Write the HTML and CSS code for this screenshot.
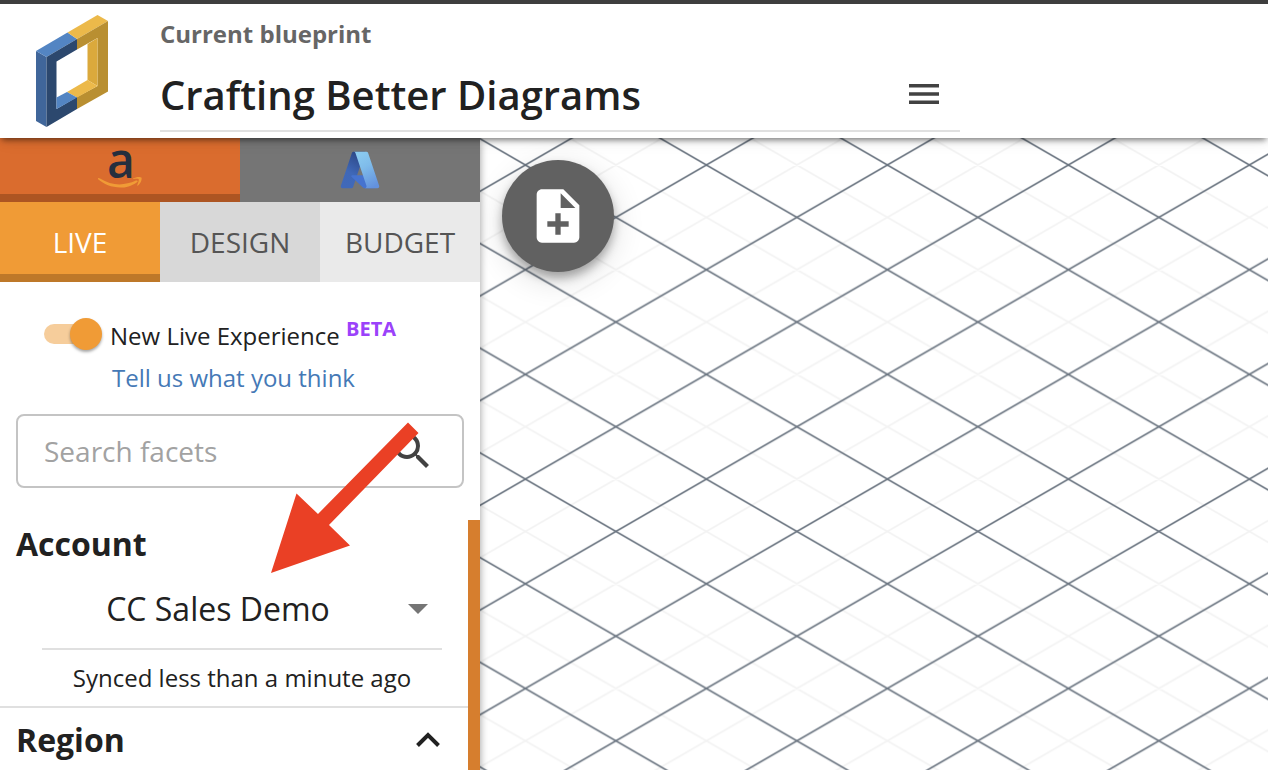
FILE: index.html
```html
<!DOCTYPE html>
<html lang="en">
<head>
<meta charset="utf-8">
<meta name="viewport" content="width=device-width, initial-scale=1">
<title>Crafting Better Diagrams</title>
<link rel="stylesheet" href="styles.css">
</head>
<body class="app">
<header class="header">
  <a class="brand" href="#" aria-label="Home">
    <svg width="76" height="114" viewBox="34 14 76 114" aria-hidden="true">
      <path fill="#40669a" d="M36 51l10.500 6v70L36 121z"/>
      <path fill="#5385c3" d="M36 51l31.500-18.500L77 39 46.500 57z"/>
      <path fill="#ecb94a" d="M67.500 32.500L97.500 15 108 21 77 39z"/>
      <path fill="#2c486e" d="M46.500 57L77 39v10.500L56.500 61.500V109L77 97v12l-30.500 18z"/>
      <path fill="#b98f31" d="M77 39l31-18v70.500L77 109V97l20.500-11V38L77 49.500z"/>
      <path fill="#dba93c" d="M87.500 44l10-6v48l-10-6z"/>
      <path fill="#ecb94a" d="M87.500 80l10 6L77 97.500 67 92z"/>
      <path fill="#5385c3" d="M67 92l10 5.500L56.500 109V97.500z"/>
    </svg>
  </a>
  <div class="blueprint">
    <label class="blueprint-label" for="blueprint-name">Current blueprint</label>
    <div class="blueprint-field">
      <input class="blueprint-name" id="blueprint-name" type="text" value="Crafting Better Diagrams">
      <button class="icon-button" type="button" aria-label="Blueprint menu">
        <svg width="32" height="20" viewBox="0 0 32 20" aria-hidden="true"><path fill="#424242" d="M1 0h30v3.400H1zM1 8.300h30v3.400H1zM1 16.600h30V20H1z"/></svg>
      </button>
    </div>
  </div>
</header>
<div class="workspace">
  <aside class="sidebar">
    <div class="clouds">
      <button class="cloud cloud-active" type="button" aria-label="AWS">
        <svg class="aws" width="48" height="40" viewBox="0 0 48 40" aria-hidden="true">
          <text class="aws-letter" x="25" y="29" text-anchor="middle">a</text>
          <path fill="#f09b36" d="M2 29.500c.4-.8 1.200-.4 2 .1C16 37 28 37 40 31.600c1.500-.7 2.400.5 1 1.600C35 37.400 30 38.600 24.500 38.600 15.500 38.600 7.500 35 2.400 30.600c-.4-.4-.6-.7-.4-1.100z"/>
          <path fill="#f09b36" d="M37 29.600c3-2 7.600-2 8.400-1 .8 1-.2 5.600-3.400 7.800-.7.500-1 .2-.7-.5.900-2 2-5 1.300-5.800-.7-.7-3.300-.4-5-.2-.8.100-1-.1-.6-.3z"/>
        </svg>
      </button>
      <button class="cloud" type="button" aria-label="Azure">
        <svg width="42" height="42" viewBox="0 0 96 96" aria-hidden="true">
          <defs>
            <linearGradient id="az-left" x1="0.700" y1="0" x2="0.300" y2="1"><stop offset="0" stop-color="#2c4684"/><stop offset="0.600" stop-color="#3f68b8"/><stop offset="1" stop-color="#4169b9"/></linearGradient>
            <linearGradient id="az-right" x1="0.300" y1="0" x2="0.700" y2="1"><stop offset="0" stop-color="#8bcbf0"/><stop offset="0.400" stop-color="#7fbcea"/><stop offset="1" stop-color="#6391dd"/></linearGradient>
          </defs>
          <path fill="url(#az-left)" d="M33.338 6.544h26.038l-27.030 80.087a4.152 4.152 0 0 1-3.933 2.824H8.149a4.145 4.145 0 0 1-3.928-5.470L29.404 9.368a4.152 4.152 0 0 1 3.934-2.825z"/>
          <path fill="#4673cf" d="M71.175 60.261h-41.290a1.911 1.911 0 0 0-1.305 3.309l26.532 24.764a4.171 4.171 0 0 0 2.846 1.121h23.380z"/>
          <path fill="url(#az-right)" d="M66.595 9.364a4.145 4.145 0 0 0-3.928-2.820H33.648a4.146 4.146 0 0 1 3.928 2.820l25.184 74.620a4.146 4.146 0 0 1-3.928 5.472h29.020a4.146 4.146 0 0 0 3.927-5.472z"/>
        </svg>
      </button>
    </div>
    <nav class="modes">
      <button class="mode mode-live" type="button">LIVE</button>
      <button class="mode mode-design" type="button">DESIGN</button>
      <button class="mode mode-budget" type="button">BUDGET</button>
    </nav>
    <div class="experience">
      <div class="toggle-row">
        <input class="switch" id="live-toggle" type="checkbox" role="switch" checked>
        <label class="toggle-label" for="live-toggle">New Live Experience <span class="beta">BETA</span></label>
      </div>
      <a class="feedback" href="#">Tell us what you think</a>
    </div>
    <div class="search">
      <input class="search-input" type="search" placeholder="Search facets" aria-label="Search facets">
      <svg class="search-icon" width="48" height="48" viewBox="0 0 24 24" aria-hidden="true"><path fill="#424242" d="M15.500 14h-.79l-.28-.27A6.471 6.471 0 0 0 16 9.500 6.500 6.500 0 1 0 9.500 16c1.610 0 3.090-.59 4.230-1.570l.27.28v.79l5 4.990L20.490 19l-4.990-5zm-6 0C7.010 14 5 11.990 5 9.500S7.010 5 9.500 5 14 7.010 14 9.500 11.990 14 9.500 14z"/></svg>
    </div>
    <div class="facets">
      <div class="facet-list">
        <section class="facet">
          <label class="facet-title" for="account">Account</label>
          <div class="account">
            <select class="account-select" id="account"><option>CC Sales Demo</option></select>
            <svg class="account-caret" width="20" height="10" viewBox="0 0 20 10" aria-hidden="true"><path fill="#757575" d="M0 0h20L10 10z"/></svg>
          </div>
          <p class="synced">Synced less than a minute ago</p>
        </section>
        <section class="facet">
          <button class="facet-toggle" type="button">
            <span class="facet-title">Region</span>
            <svg width="24" height="16" viewBox="0 0 24 16" aria-hidden="true"><path fill="none" stroke="#212121" stroke-width="4" d="M1.500 13.500L12 3l10.500 10.500"/></svg>
          </button>
        </section>
      </div>
      <div class="scrollbar"></div>
    </div>
    <svg class="pointer" width="148" height="152" viewBox="0 0 148 152" aria-hidden="true"><path fill="#ea4025" d="M137 .500L147.500 11 58 103l21 20.500L0 151 25.500 71.500 47 92z"/></svg>
  </aside>
  <main class="canvas">
    <svg class="grid" width="100%" height="100%" aria-hidden="true">
      <defs>
        <pattern id="iso" x="45.400" y="27" width="181" height="104.700" patternUnits="userSpaceOnUse">
          <path fill="none" stroke="#f3f3f3" stroke-width="1.800" d="M80 -6.070L191 58.140M101 -6.070L-10 58.140M-10 46.570L101 110.770M191 46.570L80 110.770"/>
          <path fill="none" stroke="#6b7581" stroke-width="1.600" d="M-9 -5.210L190 109.910M-9 109.910L190 -5.210M-9 5.210L9 -5.210M172 -5.210L190 5.210M-9 99.490L9 109.910M172 109.910L190 99.490"/>
        </pattern>
      </defs>
      <rect width="100%" height="100%" fill="url(#iso)"/>
    </svg>
    <button class="fab" type="button" aria-label="New blueprint">
      <svg width="64" height="64" viewBox="0 0 24 24" aria-hidden="true"><path fill="#fff" d="M14 2H6c-1.100 0-2 .9-2 2v16c0 1.100.9 2 2 2h12c1.100 0 2-.9 2-2V8zm2 14h-3v3h-2v-3H8v-2h3v-3h2v3h3zM13 9V3.500L18.500 9z"/></svg>
    </button>
  </main>
</div>
</body>
</html>
```

FILE: styles.css
```css
* {
  box-sizing: border-box;
}

.app {
  margin: 0;
  height: 100vh;
  display: flex;
  flex-direction: column;
  overflow: hidden;
  background: #fff;
  color: #212121;
  font-family: "Open Sans", "Noto Sans", sans-serif;
  font-size: 24px;
  line-height: 32px;
}

button,
input,
select {
  margin: 0;
  padding: 0;
  border: 0;
  background: none;
  color: inherit;
  font: inherit;
}

button {
  display: flex;
  align-items: center;
  justify-content: center;
  cursor: pointer;
}

svg {
  display: block;
  flex: none;
}

.header {
  position: relative;
  z-index: 2;
  flex: none;
  display: flex;
  border-top: 4px solid #3e3e3e;
  background: #fff;
  box-shadow: 0 4px 6px -2px rgba(0, 0, 0, 0.5), 0 2px 16px rgba(0, 0, 0, 0.08);
}

.brand {
  width: 160px;
  padding: 10px 0 0 34px;
}

.blueprint {
  flex: 0 1 800px;
  padding: 14px 0 6px;
}

.blueprint-label {
  display: block;
  color: #666;
  font-weight: 700;
}

.blueprint-field {
  display: flex;
  align-items: center;
  padding: 8px 20px 0 0;
  border-bottom: 2px solid #e0e0e0;
}

.blueprint-name {
  flex: 1;
  min-width: 0;
  height: 72px;
  font-size: 40px;
  font-weight: 600;
}

.workspace {
  flex: 1;
  min-height: 0;
  display: flex;
}

.sidebar {
  position: relative;
  z-index: 1;
  flex: none;
  width: 480px;
  display: flex;
  flex-direction: column;
  background: #fff;
  box-shadow: 0 4px 8px rgba(0, 0, 0, 0.4);
}

.clouds,
.modes {
  flex: none;
  display: flex;
}

.cloud {
  flex: 1;
  height: 64px;
  background: #757575;
}

.cloud-active {
  border-bottom: 8px solid #ad5522;
  background: #da6c2e;
}

.aws {
  margin-top: 6px;
  overflow: visible;
}

.aws-letter {
  fill: #252f3e;
  font-size: 48px;
  font-weight: 600;
}

.mode {
  flex: 1;
  height: 80px;
  border-top: 8px solid transparent;
  border-bottom: 8px solid transparent;
  color: #555;
  font-size: 28px;
}

.mode-live {
  border-top-color: #f09b36;
  border-bottom-color: #be7829;
  background: #f09b36;
  color: #fff;
}

.mode-design {
  background: #d8d8d8;
}

.mode-budget {
  background: #eaeaea;
}

.experience {
  padding: 32px 16px 20px 44px;
}

.toggle-row {
  display: flex;
  align-items: center;
  gap: 8px;
  height: 42px;
}

.switch {
  appearance: none;
  position: relative;
  flex: none;
  width: 58px;
  height: 20px;
  margin-bottom: 2px;
  border-radius: 10px;
  background: linear-gradient(90deg, #f6cd9b 48px, transparent 48px);
}

.switch::before {
  content: "";
  position: absolute;
  top: -6px;
  right: 0;
  width: 32px;
  height: 32px;
  border-radius: 50%;
  background: #f09b36;
  box-shadow: 0 2px 3px rgba(0, 0, 0, 0.35);
}

.toggle-label {
  padding-top: 4px;
}

.beta {
  position: relative;
  top: -9px;
  color: #9b42fa;
  font-size: 20px;
  font-weight: 700;
}

.feedback {
  display: block;
  padding: 6px 0 0 68px;
  color: #4579b6;
  text-decoration: none;
}

.search {
  flex: none;
  display: flex;
  align-items: center;
  height: 74px;
  margin: 0 16px;
  padding: 0 26px;
  border: 2px solid #c4c4c4;
  border-radius: 8px;
}

.search-input {
  flex: 1;
  min-width: 0;
  appearance: none;
  font-size: 28px;
}

.search-input::placeholder {
  color: #a2a2a2;
  opacity: 1;
}

.facets {
  flex: 1;
  min-height: 0;
  display: flex;
  margin-top: 32px;
}

.facet-list {
  flex: 1;
  overflow: hidden;
}

.scrollbar {
  width: 12px;
  background: #d67e2e;
}

.facet {
  border-bottom: 2px solid #e0e0e0;
}

.facet-title {
  display: block;
  padding-left: 16px;
  font-size: 32px;
  font-weight: 700;
  line-height: 48px;
}

.account {
  display: flex;
  align-items: center;
  margin: 0 26px 0 42px;
  padding: 2px 14px 0 0;
  border-bottom: 2px solid #e0e0e0;
}

.account-select {
  flex: 1;
  height: 78px;
  margin-right: 14px;
  appearance: none;
  font-size: 32px;
  text-align-last: center;
}

.synced {
  margin: 0 26px 0 42px;
  line-height: 56px;
  text-align: center;
}

.facet-toggle {
  width: 100%;
  height: 64px;
  padding-right: 28px;
  justify-content: space-between;
}

.pointer {
  position: absolute;
  top: 284px;
  left: 271px;
}

.canvas {
  position: relative;
  flex: 1;
  min-width: 0;
}

.fab {
  position: absolute;
  top: 22px;
  left: 22px;
  width: 112px;
  height: 112px;
  border-radius: 50%;
  background: #616161;
  box-shadow: 0 6px 10px rgba(0, 0, 0, 0.3), 0 8px 32px rgba(0, 0, 0, 0.14);
}
```
